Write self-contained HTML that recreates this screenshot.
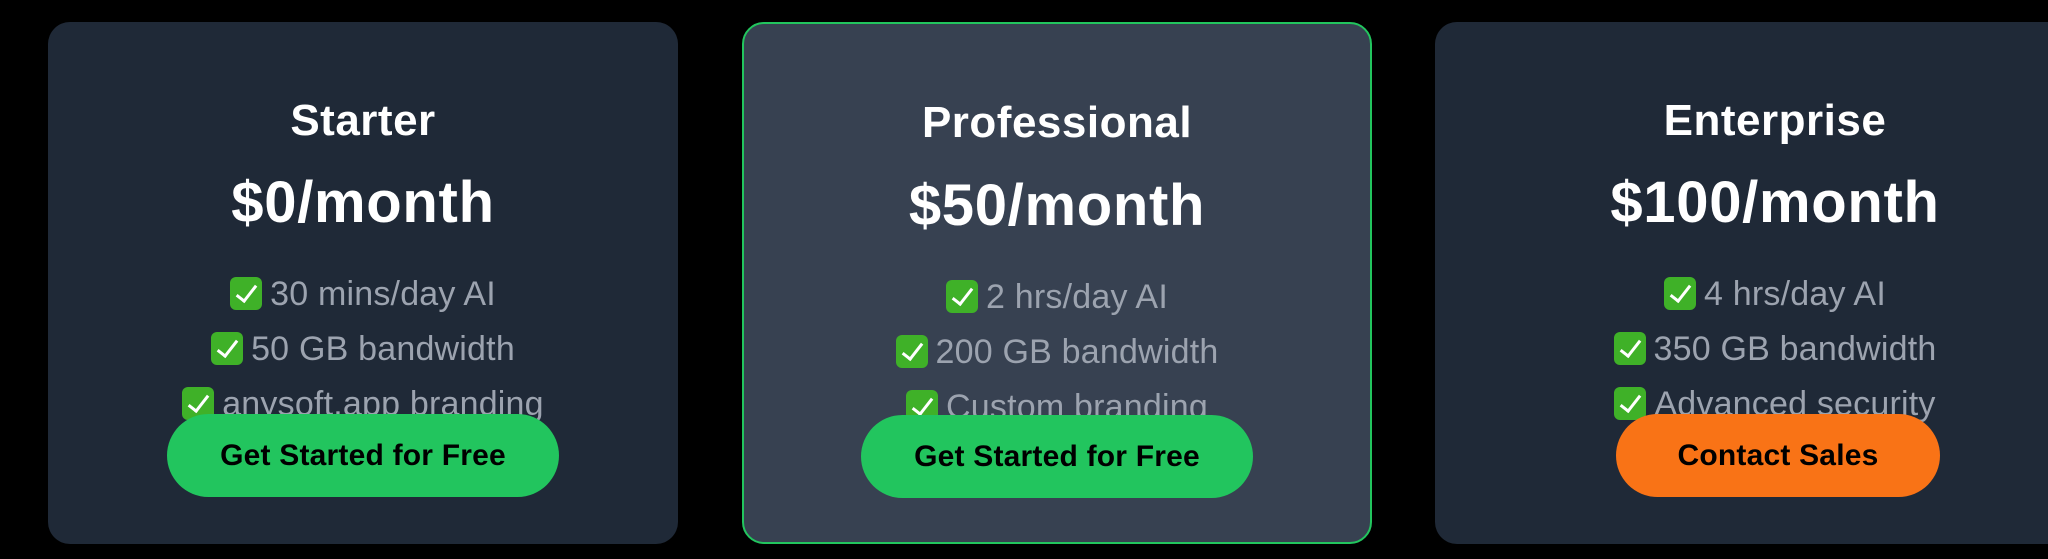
<!DOCTYPE html>
<html><head><style>
*{margin:0;padding:0;box-sizing:border-box}
body{width:2048px;height:559px;background:#000;position:relative;overflow:hidden;font-family:"Liberation Sans",sans-serif}
.card{position:absolute;top:22px;height:522px;border-radius:22px;background:#1f2937}
.c2{background:#374151;border:2px solid #22c55e}
.t{position:absolute;left:0;right:0;text-align:center;color:#fff;font-weight:bold;line-height:1;white-space:nowrap}
.title{top:77px;font-size:44px;letter-spacing:0.5px}
.price{top:152px;font-size:58px;letter-spacing:0.7px}
.f{position:absolute;left:0;right:0;text-align:center;color:#9ca3af;font-size:34px;line-height:1;white-space:nowrap;letter-spacing:0.2px}
.ck{display:inline-block;width:32px;height:33px;background:#3fb128;border-radius:6px;vertical-align:-5px;margin-right:8px;position:relative}
.ck:after{content:"";position:absolute;left:11px;top:4px;width:8px;height:18px;border:solid #fff;border-width:0 3px 3px 0;transform:rotate(38deg)}
.btn{position:absolute;height:83px;border-radius:42px;background:#22c55e;color:#000;font-weight:bold;font-size:30px;display:flex;align-items:center;justify-content:center;white-space:nowrap;letter-spacing:0.2px}
.or{background:#f97316}
</style></head><body>
<div class="card" style="left:48px;width:630px">
<div class="t title">Starter</div>
<div class="t price">$0/month</div>
<div class="f" style="top:255px"><span class="ck"></span>30 mins/day AI</div>
<div class="f" style="top:310px"><span class="ck"></span>50 GB bandwidth</div>
<div class="f" style="top:365px"><span class="ck"></span>anysoft.app branding</div>
<div class="btn" style="left:119px;width:392px;top:392px">Get Started for Free</div>
</div>
<div class="card c2" style="left:742px;width:630px">
<div class="t title" style="top:77px">Professional</div>
<div class="t price" style="top:153px">$50/month</div>
<div class="f" style="top:256px"><span class="ck"></span>2 hrs/day AI</div>
<div class="f" style="top:311px"><span class="ck"></span>200 GB bandwidth</div>
<div class="f" style="top:366px"><span class="ck"></span>Custom branding</div>
<div class="btn" style="left:117px;width:392px;top:391px">Get Started for Free</div>
</div>
<div class="card" style="left:1435px;width:680px">
<div class="t title">Enterprise</div>
<div class="t price">$100/month</div>
<div class="f" style="top:255px"><span class="ck"></span>4 hrs/day AI</div>
<div class="f" style="top:310px"><span class="ck"></span>350 GB bandwidth</div>
<div class="f" style="top:365px"><span class="ck"></span>Advanced security</div>
<div class="btn or" style="left:181px;width:324px;top:392px">Contact Sales</div>
</div>
</body></html>
